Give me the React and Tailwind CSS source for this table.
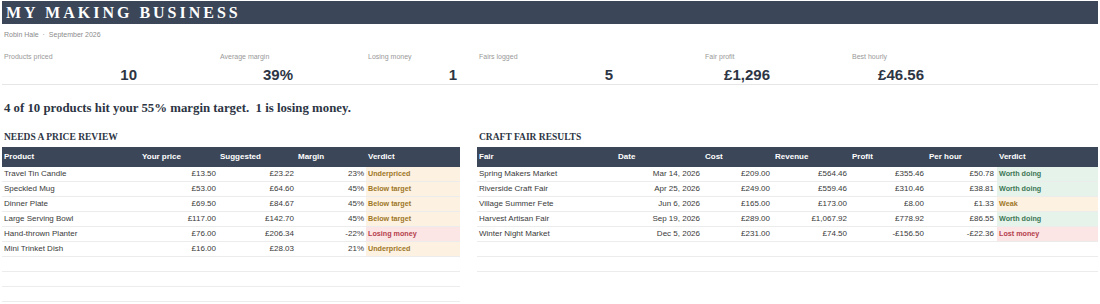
import React from 'react';

const kpis = [
  { label: 'Products priced', value: '10', col: 'col-start-1' },
  { label: 'Average margin', value: '39%', col: 'col-start-3' },
  { label: 'Losing money', value: '1', col: 'col-start-5' },
  { label: 'Fairs logged', value: '5', col: 'col-start-7' },
  { label: 'Fair profit', value: '£1,296', col: 'col-start-9' },
  { label: 'Best hourly', value: '£46.56', col: 'col-start-11' },
];

const products = [
  ['Travel Tin Candle', '£13.50', '£23.22', '23%', 'Underpriced'],
  ['Speckled Mug', '£53.00', '£64.60', '45%', 'Below target'],
  ['Dinner Plate', '£69.50', '£84.67', '45%', 'Below target'],
  ['Large Serving Bowl', '£117.00', '£142.70', '45%', 'Below target'],
  ['Hand-thrown Planter', '£76.00', '£206.34', '-22%', 'Losing money'],
  ['Mini Trinket Dish', '£16.00', '£28.03', '21%', 'Underpriced'],
];

const fairs = [
  ['Spring Makers Market', 'Mar 14, 2026', '£209.00', '£564.46', '£355.46', '£50.78', 'Worth doing'],
  ['Riverside Craft Fair', 'Apr 25, 2026', '£249.00', '£559.46', '£310.46', '£38.81', 'Worth doing'],
  ['Village Summer Fete', 'Jun 6, 2026', '£165.00', '£173.00', '£8.00', '£1.33', 'Weak'],
  ['Harvest Artisan Fair', 'Sep 19, 2026', '£289.00', '£1,067.92', '£778.92', '£86.55', 'Worth doing'],
  ['Winter Night Market', 'Dec 5, 2026', '£231.00', '£74.50', '-£156.50', '-£22.36', 'Lost money'],
];

// verdict -> cell colours
const verdictStyle = {
  'Underpriced': 'bg-[#fdf1e1] text-[#9e7727]',
  'Below target': 'bg-[#fdf1e1] text-[#9e7727]',
  'Weak': 'bg-[#fdf1e1] text-[#9e7727]',
  'Losing money': 'bg-[#fce5e5] text-[#b4404c]',
  'Lost money': 'bg-[#fce5e5] text-[#b4404c]',
  'Worth doing': 'bg-[#e6f3ea] text-[#3d7655]',
};

const serif = "font-['Liberation_Serif',Georgia,serif]";

function SectionTitle({ children }) {
  return (
    <div className={`${serif} font-bold text-[9.5px] leading-[12px] text-[#2d3544] pl-[2px] mb-[4px]`}>
      {children}
    </div>
  );
}

function HeadRow({ cols, heads }) {
  return (
    <div className={`grid ${cols} h-[20px] bg-[#3b4658] text-white font-bold text-[8px] items-center`}>
      {heads.map((h) => (
        <div key={h} className="pl-[2px] truncate">{h}</div>
      ))}
    </div>
  );
}

function EmptyRow({ cols }) {
  return <div className={`grid ${cols} h-[15px] border-b border-[#ececec]`} />;
}

export default function App() {
  const leftCols = 'grid-cols-[138px_78px_78px_70px_94px]';
  const rightCols = 'grid-cols-[139px_87px_70px_77px_77px_70px_101px]';

  return (
    <div className="w-[1100px] h-[304px] overflow-hidden bg-white font-['Liberation_Sans',Arial,sans-serif] text-[#3a3a3a]">
      <div className="mx-[2px] mt-[1px] h-[23px] bg-[#3b4658] flex items-center pl-[4px]">
        <h1 className={`${serif} font-bold text-white text-[16px] tracking-[3px] leading-none`}>
          MY MAKING BUSINESS
        </h1>
      </div>

      <div className="pl-[4px] pt-[5px] text-[7px] leading-[11px] text-[#8c8c8c]">
        Robin Hale <span className="mx-[2px]">·</span> September 2026
      </div>

      <div className="mx-[2px] grid grid-cols-[138px_78px_78px_70px_94px_17px_139px_87px_70px_77px_77px_70px_101px] border-b border-[#e6e6e6] pt-[12px]">
        {kpis.map((k) => (
          <div key={k.label} className={`${k.col} row-start-1 flex flex-col`}>
            <div className="pl-[2px] text-[7px] leading-[10px] text-[#999] whitespace-nowrap">{k.label}</div>
            <div className="mt-[4px] pr-[3px] text-right font-bold text-[15px] leading-[18px] text-[#2d3544]">{k.value}</div>
          </div>
        ))}
      </div>

      <div className={`${serif} font-bold text-[12.8px] leading-[18px] text-[#2d3544] pl-[4px] mt-[14px] whitespace-pre`}>
        {'4 of 10 products hit your 55% margin target.  1 is losing money.'}
      </div>

      <div className="flex gap-[17px] ml-[2px] mt-[14px]">
        <div className="w-[458px]">
          <SectionTitle>NEEDS A PRICE REVIEW</SectionTitle>
          <HeadRow cols={leftCols} heads={['Product', 'Your price', 'Suggested', 'Margin', 'Verdict']} />
          {products.map((p) => (
            <div key={p[0]} className={`grid ${leftCols} h-[15px] border-b border-[#ececec] text-[8px] leading-[14px]`}>
              <div className="pl-[2px] truncate">{p[0]}</div>
              <div className="text-right pr-[2px]">{p[1]}</div>
              <div className="text-right pr-[2px]">{p[2]}</div>
              <div className="text-right pr-[2px]">{p[3]}</div>
              <div className={`pl-[2px] font-bold text-[7.2px] ${verdictStyle[p[4]]}`}>{p[4]}</div>
            </div>
          ))}
          <EmptyRow cols={leftCols} />
          <EmptyRow cols={leftCols} />
          <EmptyRow cols={leftCols} />
        </div>

        <div className="w-[621px]">
          <SectionTitle>CRAFT FAIR RESULTS</SectionTitle>
          <HeadRow cols={rightCols} heads={['Fair', 'Date', 'Cost', 'Revenue', 'Profit', 'Per hour', 'Verdict']} />
          {fairs.map((f) => (
            <div key={f[0]} className={`grid ${rightCols} h-[15px] border-b border-[#ececec] text-[8px] leading-[14px]`}>
              <div className="pl-[2px] truncate">{f[0]}</div>
              {f.slice(1, 6).map((v, i) => (
                <div key={i} className="text-right pr-[3px]">{v}</div>
              ))}
              <div className={`pl-[2px] font-bold text-[7.2px] ${verdictStyle[f[6]]}`}>{f[6]}</div>
            </div>
          ))}
          <EmptyRow cols={rightCols} />
          <EmptyRow cols={rightCols} />
        </div>
      </div>
    </div>
  );
}
